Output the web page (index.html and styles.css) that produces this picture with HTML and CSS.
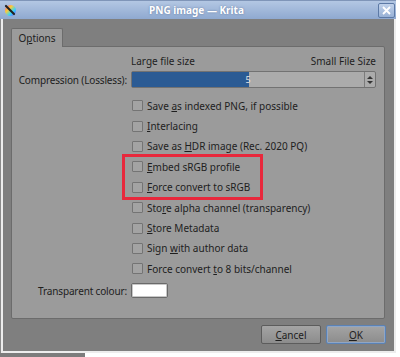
FILE: index.html
```html
<!DOCTYPE html>
<html>
<head>
<meta charset="utf-8">
<link rel="stylesheet" href="styles.css">
</head>
<body>
<div class="window">
  <div class="titlebar">
    <svg class="app-icon" width="13" height="13" viewBox="0 0 13 13">
      <defs>
        <linearGradient id="g1" x1="0" y1="0" x2="1" y2="1">
          <stop offset="0" stop-color="#ff3fa0"/>
          <stop offset="0.35" stop-color="#ffcc33"/>
          <stop offset="0.65" stop-color="#33d6ff"/>
          <stop offset="1" stop-color="#8a3cff"/>
        </linearGradient>
      </defs>
      <circle cx="6.5" cy="6.5" r="5.5" fill="url(#g1)"/>
      <path d="M2 2 L10 10" stroke="#222" stroke-width="2.2" stroke-linecap="round"/>
    </svg>
    <span class="title">PNG image — Krita</span>
    <span class="close">
      <svg width="11" height="11" viewBox="0 0 11 11"><path d="M2 2 L9 9 M9 2 L2 9" stroke="#fff" stroke-width="1.8"/></svg>
    </span>
  </div>
  <div class="frame">
    <div class="tabs"><span class="tab"><span>O<u>p</u>tions</span></span></div>
    <div class="pane">
      <div class="grid">
        <div></div>
        <div class="scale"><span>Large file size</span><span>Small File Size</span></div>
        <div class="label">Compression (Lossless):</div>
        <div class="slider">
          <div class="track"><div class="fill" style="width:117px"></div><span class="val">5</span></div>
          <div class="spin"><span class="up"></span><span class="down"></span></div>
        </div>
        <div></div>
        <div class="checks">
          <label class="cb"><span class="box"></span><span>Save <u>a</u>s indexed PNG, if possible</span></label>
          <label class="cb"><span class="box"></span><span><u>I</u>nterlacing</span></label>
          <label class="cb"><span class="box"></span><span>Save as <u>H</u>DR image (Rec. 2020 PQ)</span></label>
          <label class="cb"><span class="box"></span><span><u>E</u>mbed sRGB profile</span></label>
          <label class="cb"><span class="box"></span><span><u>F</u>orce convert to sRGB</span></label>
          <label class="cb"><span class="box"></span><span>Sto<u>r</u>e alpha channel (transparency)</span></label>
          <label class="cb"><span class="box"></span><span><u>S</u>tore Metadata</span></label>
          <label class="cb"><span class="box"></span><span>Sign <u>w</u>ith author data</span></label>
          <label class="cb"><span class="box"></span><span>Force convert <u>t</u>o 8 bits/channel</span></label>
        </div>
        <div class="label">Transparent colour:</div>
        <div class="colorrow"><span class="swatch"></span></div>
      </div>
      <div class="highlight"></div>
    </div>
    <div class="buttons">
      <button class="btn"><u>C</u>ancel</button>
      <button class="btn ok"><u>O</u>K</button>
    </div>
  </div>
</div>
<div class="under"></div>
</body>
</html>
```
FILE: styles.css
```css
html, body {
  margin: 0;
  padding: 0;
}
body {
  width: 400px;
  height: 357px;
  overflow: hidden;
  background: #ffffff;
  font-family: "Noto Sans", "DejaVu Sans", sans-serif;
  font-size: 10px;
  color: #1e1e1e;
  position: relative;
}
u {
  text-decoration-thickness: 1px;
  text-underline-offset: 1px;
}
.window {
  width: 396px;
  height: 353px;
  display: flex;
  flex-direction: column;
  background: #8a8a8a;
  box-sizing: border-box;
}
.titlebar {
  height: 19px;
  flex: none;
  display: flex;
  align-items: center;
  position: relative;
  background: linear-gradient(#b3c7e3, #8fa9d0);
  border-top: 1px solid #7f95b8;
  box-sizing: border-box;
}
.app-icon {
  margin-left: 4px;
  flex: none;
}
.title {
  flex: 1;
  text-align: center;
  color: #ffffff;
  font-weight: bold;
  font-size: 10px;
  margin-left: -2px;
  text-shadow: 0 0 2px rgba(60, 80, 120, 0.6);
}
.close {
  width: 17px;
  height: 15px;
  margin-right: 1px;
  box-sizing: border-box;
  border: 1px solid #5d7aa6;
  border-radius: 2px;
  background: linear-gradient(#c1d2ea, #98b1d6);
  display: flex;
  align-items: center;
  justify-content: center;
}
.frame {
  flex: 1;
  margin-left: 1px;
  border: 2px solid #ededed;
  border-top: 0;
  background: #7f7f7f;
  padding: 9px 4px 0 8px;
  display: flex;
  flex-direction: column;
}
.tabs {
  display: flex;
  height: 18px;
  position: relative;
  z-index: 1;
}
.tab {
  width: 52px;
  height: 19px;
  box-sizing: border-box;
  border: 1px solid #6c6c6c;
  border-bottom: 0;
  border-radius: 2px 2px 0 0;
  background: #9b9b9b;
  display: flex;
  align-items: center;
  justify-content: center;
  padding-bottom: 1px;
}
.pane {
  position: relative;
  width: 374px;
  height: 273px;
  box-sizing: border-box;
  border: 1px solid #6c6c6c;
  border-radius: 0 2px 2px 2px;
  background: #9b9b9b;
  padding: 7px 8px 0 0;
}
.grid {
  display: grid;
  grid-template-columns: 115px 245px;
  column-gap: 4px;
  row-gap: 3px;
}
.label {
  text-align: right;
  display: flex;
  align-items: center;
  justify-content: flex-end;
  letter-spacing: -0.15px;
}
.scale {
  display: flex;
  justify-content: space-between;
  height: 14px;
  align-items: center;
}
.slider {
  height: 17px;
  display: flex;
  box-sizing: border-box;
  border: 1px solid #727272;
  border-radius: 2px;
  background: #ababab;
}
.track {
  flex: 1;
  position: relative;
  display: flex;
  align-items: center;
  justify-content: center;
}
.fill {
  position: absolute;
  left: 0;
  top: 0;
  bottom: 0;
  background: #2b5b94;
}
.val {
  position: relative;
  color: #e6e6e6;
  font-size: 9px;
}
.spin {
  width: 10px;
  border-left: 1px solid #7c7c7c;
  display: flex;
  flex-direction: column;
  align-items: center;
  justify-content: center;
  gap: 2px;
}
.up, .down {
  width: 0;
  height: 0;
  border-left: 3px solid transparent;
  border-right: 3px solid transparent;
}
.up { border-bottom: 3px solid #333; }
.down { border-top: 3px solid #333; }
.checks {
  display: grid;
  grid-auto-rows: 20.4px;
  padding-top: 4.5px;
}
.cb {
  display: flex;
  align-items: center;
  gap: 4px;
  padding-left: 1px;
}
.box {
  width: 11px;
  height: 11px;
  box-sizing: border-box;
  border: 1px solid #747474;
  border-radius: 1px;
  background: #a3a3a3;
  flex: none;
}
.colorrow {
  height: 17px;
  display: flex;
  align-items: center;
}
.swatch {
  width: 37px;
  height: 15px;
  box-sizing: border-box;
  border: 1px solid #6a6a6a;
  border-radius: 2px;
  background: #ffffff;
  box-shadow: inset 0 0 0 1px #c8c8c8;
}
.highlight {
  position: absolute;
  left: 110px;
  top: 107px;
  width: 141px;
  height: 46px;
  border: 3.5px solid #e8283c;
  box-sizing: border-box;
}
.buttons {
  display: flex;
  justify-content: flex-end;
  gap: 5px;
  margin-top: 6px;
  padding-right: 4px;
}
.btn {
  font-family: inherit;
  font-size: 10px;
  color: #1e1e1e;
  width: 60px;
  height: 19px;
  padding: 0;
  border: 1px solid #5c5c5c;
  border-radius: 2px;
  background: linear-gradient(#a4a4a4, #8c8c8c);
}
.btn.ok {
  border-color: #5a82b6;
  box-shadow: inset 0 0 0 1px #8fa6c6;
}
.under {
  position: absolute;
  left: 0;
  top: 353px;
  width: 85px;
  height: 4px;
  background: #7c7c7c;
}
```
